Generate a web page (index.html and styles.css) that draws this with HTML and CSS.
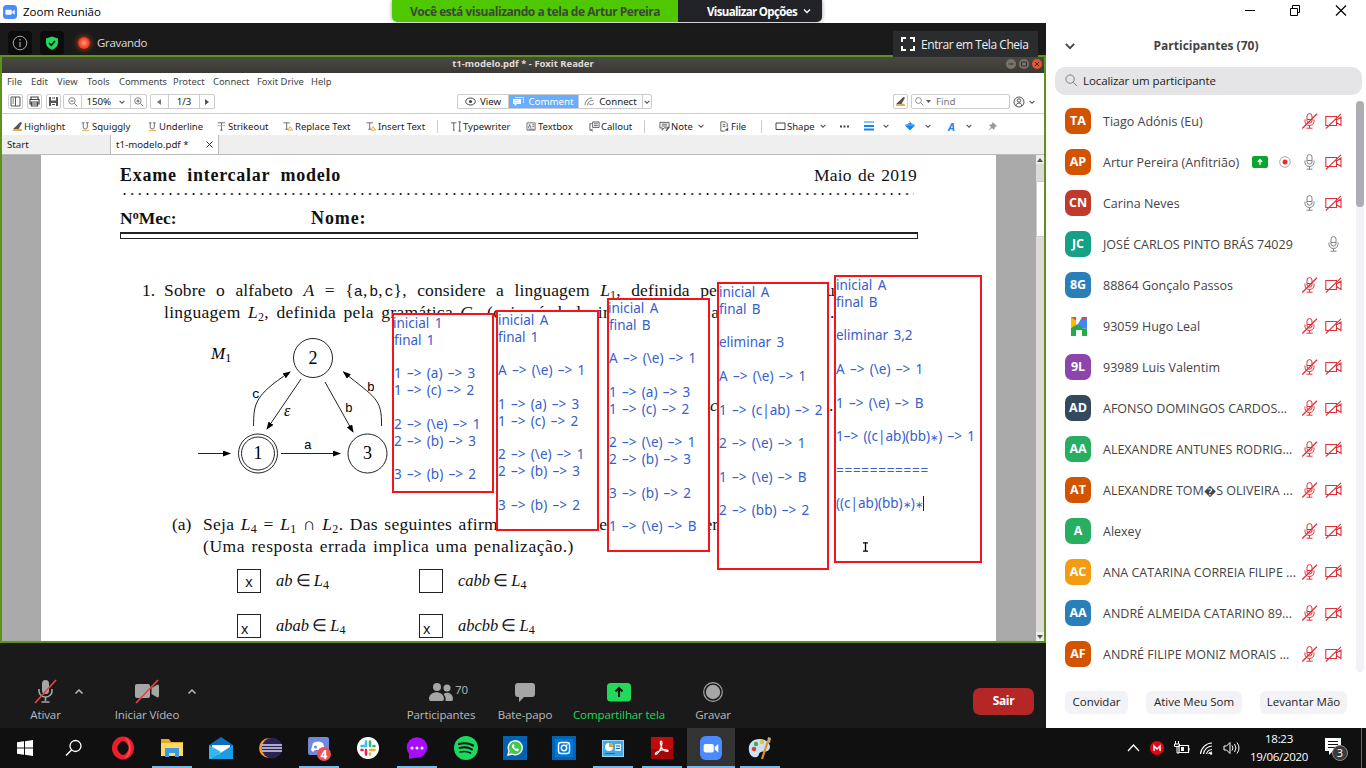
FILE: index.html
```html
<!DOCTYPE html>
<html lang="pt">
<head>
<meta charset="utf-8">
<title>Zoom Reunião</title>
<link rel="stylesheet" href="styles.css">
</head>
<body>
<svg class="defs" width="0" height="0">
  <symbol id="zoomcam" viewBox="0 0 24 24"><rect width="24" height="24" rx="6" fill="#4a8cff"/><rect x="4" y="8" width="11" height="8.500" rx="2" fill="#fff"/><path d="M16 11l4-3v8.500l-4-3z" fill="#fff"/></symbol>
  <symbol id="down" viewBox="0 0 10 10"><path d="M2 3.500l3 3 3-3" fill="none" stroke="currentColor" stroke-width="1.300"/></symbol>
  <symbol id="up" viewBox="0 0 10 10"><path d="M1.500 6.500L5 3l3.500 3.500" fill="none" stroke="currentColor" stroke-width="1.500"/></symbol>
  <symbol id="mic" viewBox="0 0 16 16"><g fill="none" stroke="currentColor"><rect x="5.500" y=".6" width="5" height="9.500" rx="2.500"/><path d="M3.500 6.500v2a4.500 4 0 0 0 9 0v-2M8 12.500v2.500M5 15.200h6M5.500 6.500h5"/></g></symbol>
  <symbol id="micoff" viewBox="0 0 16 16"><use href="#mic"/><path d="M.8 15.500L15.500.8" stroke="currentColor" stroke-width="1.300"/></symbol>
  <symbol id="camoff" viewBox="0 0 17 16"><path d="M.8 3.500h10.700v9H.8zM11.500 7l4.500-3v8.500l-4.500-3M.8 15.500L16 .8" fill="none" stroke="currentColor" stroke-width="1.100"/></symbol>
  <symbol id="lens" viewBox="0 0 14 14"><circle cx="5.500" cy="5.500" r="4.500" fill="none" stroke="currentColor"/><path d="M9 9l4 4" stroke="currentColor"/></symbol>
  <symbol id="pen" viewBox="0 0 12 12"><path d="M3 7l6-6 2 1-4 7H2z" fill="#555"/><path d="M1 9l2-2 2 2z" fill="#555"/><path d="M1 10h9V8.500H7L5.500 10" fill="#f0a030"/><path d="M1 10h10" stroke="#f0a030" stroke-width="1.500"/></symbol>
  <symbol id="uline" viewBox="0 0 10 12"><path d="M2.500 2v4.500a2 2 0 0 0 4.500 0V2M1 2h3M5.500 2h3" fill="none" stroke="#666"/><path d="M1 10.500h8" stroke="#e2a640"/></symbol>
  <symbol id="tee" viewBox="0 0 10 12"><path d="M1 2h8M5 2v8M3.500 10h3" stroke="#666" fill="none"/><path d="M1 5h8" stroke="#e2a640"/></symbol>
  <symbol id="teea" viewBox="0 0 11 12"><path d="M0 2h7M3.500 2v7M2 9h3" stroke="#666" fill="none"/><path d="M5 10l2-4 3 4z" stroke="#e8a030" fill="none"/></symbol>
  <symbol id="type" viewBox="0 0 12 12"><path d="M0 2h6M3 2v8M2 10h2M8 1h3M9.500 1v10M8 11h3" stroke="#555" fill="none"/></symbol>
  <symbol id="tbox" viewBox="0 0 12 12"><path d="M1 2h9v8H1z" stroke="#777" fill="#eee"/><path d="M2.500 8l1.500-4 1.500 4M7 4h2M7 6h2M3 9h6" stroke="#555" fill="none" stroke-width=".8"/></symbol>
  <symbol id="callout" viewBox="0 0 12 12"><path d="M4 1h7v6H4zM5.500 3h4M5.500 5h4M3 3H1v7h3M4 8.500L2.500 10 4 11.500" stroke="#555" fill="none"/></symbol>
  <symbol id="note" viewBox="0 0 12 12"><path d="M1 1.500h10v6H5.500L3.500 10V7.500H1zM3 3.500h6M3 5.500h6" stroke="#555" fill="none"/><path d="M7 11l3-5 1.500 1-3 4z" fill="#555"/></symbol>
  <symbol id="file" viewBox="0 0 12 12"><path d="M2 1h5l2 2v4M2 1v10h4M4 4h3M4 6h3" stroke="#555" fill="none"/><path d="M6 10l4-3v4z" fill="#555"/></symbol>
  <symbol id="conn" viewBox="0 0 12 12"><path d="M1 10a8 8 0 0 1 8-8M4 10a5 5 0 0 1 6-5M5 8a4 4 0 0 0 6 0" stroke="#777" fill="none"/></symbol>
  <marker id="head" markerWidth="8" markerHeight="6" refX="7" refY="3" orient="auto" markerUnits="userSpaceOnUse"><path d="M0 0L8 3 0 6z"/></marker>
</svg>
<header class="titlebar">
  <svg class="i14"><use href="#zoomcam"/></svg><span class="apptitle">Zoom Reunião</span>
  <div class="banner"><b class="viewing"><span>Você está visualizando a tela de Artur Pereira</span></b><b class="options"><span>Visualizar Opções</span><svg class="i10"><use href="#down"/></svg></b></div>
  <svg class="winctl" width="110" height="20" viewBox="0 0 110 20"><path d="M5 10.500h10" stroke="#000"/><path d="M50.500 8.500h7v7h-7zM52.500 8.500v-3h7v7h-2.500" fill="none" stroke="#000"/><path d="M96 5.500l10 10M106 5.500l-10 10" stroke="#000" stroke-width="1.200"/></svg>
</header>
<div class="main">
<section class="meeting">
  <div class="status">
    <span class="badge"><svg width="16" height="16"><circle cx="8" cy="8" r="6.800" fill="none" stroke="#aaa"/><path d="M8 7v5M8 4v1.500" stroke="#aaa" stroke-width="1.200"/></svg></span>
    <span class="badge"><svg width="14" height="14" viewBox="0 0 14 14"><path d="M7 .5l6 2v4c0 3.500-2.500 6-6 7.300C3.500 12.500 1 10 1 6.500v-4z" fill="#23d959"/><path d="M4 7l2.300 2.300L10 5" stroke="#111" stroke-width="1.500" fill="none"/></svg></span>
    <i class="rec"></i><span class="recording">Gravando</span>
    <div class="full"><svg width="14" height="14" viewBox="0 0 14 14"><path d="M1 5V1h4M9 1h4v4M13 9v4H9M5 13H1V9" fill="none" stroke="#fff" stroke-width="2"/></svg><span>Entrar em Tela Cheia</span></div>
  </div>
  <div class="share">
    <div class="foxtitle"><b>t1-modelo.pdf * - Foxit Reader</b><svg class="ubuntu" width="38" height="12"><circle cx="6" cy="6" r="5" fill="#77746c"/><circle cx="19" cy="6" r="5" fill="#77746c"/><circle cx="32" cy="6" r="5" fill="#e8552d"/><path d="M3.500 6h5M16.500 4h5v4h-5zM30 4l4 4M34 4l-4 4" fill="none" stroke="#33312e"/></svg></div>
    <nav class="menu"><span>File</span><span>Edit</span><span>View</span><span>Tools</span><span>Comments</span><span>Protect</span><span>Connect</span><span>Foxit Drive</span><span>Help</span></nav>
    <div class="tools">
      <div class="box sq"><svg width="11" height="11"><path d="M1 1h9v9H1zM5.500 1v9M2.500 3h1.500M2.500 5h1.500M2.500 7h1.500" fill="none" stroke="#555"/></svg></div>
      <div class="box sq"><svg width="11" height="11"><path d="M2 3V1h7v2M1 3.500h9V8H1zM2.500 6h6v4h-6z" fill="none" stroke="#444" stroke-width="1.200"/></svg></div>
      <div class="box sq"><svg width="11" height="11"><path d="M1 1h9v9H1z" fill="#555"/><path d="M3 1h5v3.500H3zM3 7h5v3H3z" fill="#fff"/><path d="M4 2h3M4 8.500h3" stroke="#555"/></svg></div>
      <div class="box zoomgrp"><span><svg class="i10"><use href="#lens" width="10" height="10"/><path d="M2.500 4h3" stroke="#555"/></svg></span><span>150%&nbsp; <svg class="i8"><use href="#down"/></svg></span><span><svg class="i10"><use href="#lens" width="10" height="10"/><path d="M2.500 4h3M4 2.500v3" stroke="#555"/></svg></span></div>
      <div class="box pagegrp"><span><svg width="5" height="6"><path d="M4 0v6L0 3z" fill="#777"/></svg></span><span>1/3</span><span><svg width="5" height="6"><path d="M0 0v6l4-3z" fill="#555"/></svg></span></div>
      <div class="box modes"><span><svg width="11" height="9"><ellipse cx="5.500" cy="4.500" rx="4.800" ry="3.500" fill="none" stroke="#444"/><circle cx="5.500" cy="4.500" r="1.600" fill="#444"/></svg>View</span><span class="on"><svg width="11" height="10"><path d="M0 2h8v5H4L2 9 1.500 7H0z" fill="#fff"/><path d="M2 .5h8.500V6M1.500 3.500h5M1.500 5.500h5" fill="none" stroke="#cfe4ff"/></svg>Comment</span><span><svg class="i11"><use href="#conn"/></svg>Connect</span><span><svg class="i8"><use href="#down"/></svg></span></div>
      <div class="box sq hl"><svg class="i11"><use href="#pen"/></svg></div>
      <div class="box find"><svg class="i9"><use href="#lens"/></svg><svg width="5" height="3"><path d="M0 0h5L2.500 3z" fill="#555"/></svg><span>Find</span></div>
      <div class="user"><svg width="12" height="12"><circle cx="6" cy="6" r="5" fill="none" stroke="#555"/><circle cx="6" cy="4.500" r="1.700" fill="none" stroke="#555"/><path d="M3 10c0-4 6-4 6 0" fill="none" stroke="#555"/></svg><svg class="i8"><use href="#down"/></svg></div>
    </div>
    <div class="comments">
      <span><svg class="i11"><use href="#pen"/></svg>Highlight</span><span><svg class="i11"><use href="#uline"/></svg>Squiggly</span><span><svg class="i11"><use href="#uline"/></svg>Underline</span><span><svg class="i11"><use href="#tee"/></svg>Strikeout</span><span><svg class="i11"><use href="#teea"/></svg>Replace Text</span><span><svg class="i11"><use href="#teea"/></svg>Insert Text</span><i class="sep"></i>
      <span><svg class="i11"><use href="#type"/></svg>Typewriter</span><span><svg class="i11"><use href="#tbox"/></svg>Textbox</span><span><svg class="i11"><use href="#callout"/></svg>Callout</span><i class="sep"></i>
      <span><svg class="i11"><use href="#note"/></svg>Note</span><svg class="i8"><use href="#down"/></svg><span><svg class="i11"><use href="#file"/></svg>File</span><i class="sep"></i>
      <span><svg width="11" height="9"><path d="M1 1h9v6.500H1z" fill="none" stroke="#444"/></svg>Shape</span><svg class="i8"><use href="#down"/></svg>
      <svg width="11" height="3"><path d="M1 1.500h9" stroke="#444" stroke-width="1.800" stroke-dasharray="2 1.500"/></svg>
      <svg width="10" height="10"><path d="M0 1h10" stroke="#8fc3f8" stroke-width="2"/><path d="M0 5h10M0 8.500h10" stroke="#1a84ee" stroke-width="2"/></svg><svg class="i8"><use href="#down"/></svg>
      <svg width="10" height="10"><path d="M0 4.500l5-3 5 3-5 5z" fill="#1a84ee"/><path d="M4 0l3 3M0 4h10" stroke="#74b4f4"/></svg><svg class="i8"><use href="#down"/></svg>
      <b class="ablue">A</b><svg class="i8"><use href="#down"/></svg>
      <svg width="9" height="9"><path d="M4.500 0L9 4 7 5 6 8 1 3l3-1zM0 9l3-4 1 1z" fill="#999"/></svg>
    </div>
    <div class="tabs"><span>Start</span><span class="cur">t1-modelo.pdf * <svg width="7" height="7"><path d="M.5.500l6 6M6.500.500l-6 6" stroke="#333"/></svg></span></div>
    <div class="viewer">
      <article class="page">
        <div class="heading"><b class="w220">Exame intercalar modelo</b><span class="w103">Maio de 2019</span></div>
        <div class="dots"></div>
        <div class="fields"><b class="w67">N<sup>o</sup>Mec:</b><b class="w57">Nome:</b></div>
        <div class="rule"></div>
        <div class="question">
          <span>1.</span>
          <div>
            <p><span class="w553">Sobre o alfabeto <i>A</i> = {<code>a</code>,&#8202;<code>b</code>,&#8202;<code>c</code>}, considere a linguagem <i>L</i><sub>1</sub>, definida pe</span><span class="rest">u</span></p>
            <p><span class="w444">linguagem <i>L</i><sub>2</sub>, definida pela gramática <i>G</i><sub>2</sub> (cujo símbolo in</span><span class="rest2">a</span><span class="dot">.</span></p>
          </div>
        </div>
        <div class="figrow">
        <svg class="fig" width="240" height="189" viewBox="180 324 240 189">
          <g fill="none" stroke="#222"><circle cx="313" cy="358" r="19.500"/><circle cx="258" cy="453.500" r="19.500"/><circle cx="258" cy="453.500" r="16.500"/><circle cx="367.500" cy="453.500" r="19.500"/>
          <g marker-end="url(#head)"><path d="M198 453.500h32"/><path d="M281 453.500h59"/><path d="M253.500 426C254 405 253 396 290 372"/><path d="M301 379L267 429"/><path d="M325 382l28 50"/><path d="M381.500 426C382 398 375 398 343.500 372"/></g></g>
          <g class="num" text-anchor="middle"><text x="313" y="364">2</text><text x="258" y="459">1</text><text x="367.500" y="459">3</text></g>
          <g class="lab" text-anchor="middle"><text x="256" y="398">c</text><text x="308" y="449">a</text><text x="349" y="412">b</text><text x="371" y="391">b</text></g>
          <text class="eps" x="284" y="416">ε</text><text class="m1" x="211" y="359">M<tspan font-size="12" font-style="normal" dy="3">1</tspan></text>
        </svg>
        <span class="peek2"><i>c</i></span><span class="peek3">.</span>
        </div>
        <div class="sub"><span>(a)</span><div><p><span class="w294">Seja <i>L</i><sub>4</sub> = <i>L</i><sub>1</sub> ∩ <i>L</i><sub>2</sub>. Das seguintes afirm</span><span class="after">e</span><span class="after2">er</span></p><p><span class="w371">(Uma resposta errada implica uma penalização.)</span></p></div></div>
        <div class="answers">
          <span class="check">x</span><span><em><i>ab</i> ∈ <i>L</i><sub>4</sub></em></span><span class="check"></span><span><em><i>cabb</i> ∈ <i>L</i><sub>4</sub></em></span>
          <span class="check low">x</span><span><em><i>abab</i> ∈ <i>L</i><sub>4</sub></em></span><span class="check low">x</span><span><em><i>abcbb</i> ∈ <i>L</i><sub>4</sub></em></span>
        </div>
<pre class="memo m-a">inicial 1
final 1

1 –&gt; (a) –&gt; 3
1 –&gt; (c) –&gt; 2

2 –&gt; (\e) –&gt; 1
2 –&gt; (b) –&gt; 3

3 –&gt; (b) –&gt; 2</pre>
<pre class="memo m-b">inicial A
final 1

A –&gt; (\e) –&gt; 1

1 –&gt; (a) –&gt; 3
1 –&gt; (c) –&gt; 2

2 –&gt; (\e) –&gt; 1
2 –&gt; (b) –&gt; 3

3 –&gt; (b) –&gt; 2</pre>
<pre class="memo m-c">inicial A
final B

A –&gt; (\e) –&gt; 1

1 –&gt; (a) –&gt; 3
1 –&gt; (c) –&gt; 2

2 –&gt; (\e) –&gt; 1
2 –&gt; (b) –&gt; 3

3 –&gt; (b) –&gt; 2

1 –&gt; (\e) –&gt; B</pre>
<pre class="memo m-d">inicial A
final B

eliminar 3

A –&gt; (\e) –&gt; 1

1 –&gt; (c|ab) –&gt; 2

2 –&gt; (\e) –&gt; 1

1 –&gt; (\e) –&gt; B

2 –&gt; (bb) –&gt; 2</pre>
<pre class="memo m-e">inicial A
final B

eliminar 3,2

A –&gt; (\e) –&gt; 1

1 –&gt; (\e) –&gt; B

1–&gt; ((c|ab)(bb)<span class="ast">∗</span>) –&gt; 1

<span class="eq">===========</span>

((c|ab)(bb)<span class="ast">∗</span>)<span class="ast">∗</span><i class="caret"></i></pre>
        <svg class="ibeam" width="7" height="10"><path d="M1 .8h2l.5.700.500-.7h2M1 9.200h2l.5-.7.5.700h2M3.500 1v8" fill="none" stroke="#000" stroke-width="1.300"/></svg>
      </article>
      <div class="vscroll"><span><svg width="6" height="4"><path d="M0 4l3-4 3 4z" fill="#555"/></svg></span><i></i><span class="end"><svg width="6" height="4"><path d="M0 0l3 4 3-4z" fill="#555"/></svg></span></div>
    </div>
  </div>
  <footer class="controls">
    <div class="ctl c58"><svg width="24" height="26" viewBox="0 0 24 26"><rect x="8" y="1" width="7" height="14" rx="3.500" fill="#a6a6a6"/><path d="M5 10v2a6.500 6 0 0 0 13 0v-2M11.500 18v4M7.500 23h8" fill="none" stroke="#a6a6a6" stroke-width="1.600"/><path d="M1 24L22 1" stroke="#e5453f" stroke-width="1.700"/></svg><span>Ativar</span></div><svg class="i10 cv"><use href="#up"/></svg>
    <div class="ctl c90"><svg width="26" height="26" viewBox="0 0 26 26"><rect x="1" y="5" width="15" height="14" rx="2" fill="#a6a6a6"/><path d="M17.500 9l6-3.500q1.500 0 1.500 2v9q0 2-1.500 2l-6-3.500z" fill="#a6a6a6"/><path d="M2 24L24 1" stroke="#e5453f" stroke-width="1.700"/></svg><span>Iniciar Vídeo</span></div><svg class="i10 cv cv2"><use href="#up"/></svg>
    <div class="ctl c80"><svg width="26" height="26" viewBox="0 0 26 26"><g fill="#a6a6a6"><circle cx="9" cy="8" r="4"/><circle cx="19" cy="9" r="3.500"/><path d="M1 20c0-9 15-9 15 0q0 2-2 2H3q-2 0-2-2zM17.500 22c.8-3-.5-5-2-7 4-3 9.500-.5 9.500 5q0 2-1.500 2z"/></g></svg><em>70</em><span>Participantes</span></div>
    <div class="ctl c88"><svg width="24" height="26" viewBox="0 0 24 26"><path d="M5 4h14q3 0 3 3v8q0 3-3 3h-8l-5 5v-5H5q-3 0-3-3V7q0-3 3-3z" fill="#a6a6a6"/></svg><span>Bate-papo</span></div>
    <div class="ctl c100 green"><svg width="24" height="26" viewBox="0 0 24 26"><rect y="4" width="24" height="18.500" rx="3.500" fill="#23d959"/><path d="M12 18V9.500M8.500 12.500L12 9l3.500 3.500" stroke="#111" stroke-width="2" fill="none"/></svg><span>Compartilhar tela</span></div>
    <div class="ctl c88"><svg width="24" height="26" viewBox="0 0 24 26"><circle cx="12" cy="13" r="7.200" fill="#a6a6a6"/><circle cx="12" cy="13" r="9.300" fill="none" stroke="#a6a6a6" stroke-width="1.200"/></svg><span>Gravar</span></div>
    <b class="leave">Sair</b>
  </footer>
</section>
<aside class="panel">
  <div class="phead"><svg class="i12"><use href="#down"/></svg><b>Participantes (70)</b></div>
  <div class="search"><svg class="i14"><use href="#lens"/></svg><span>Localizar um participante</span></div>
  <div class="listwrap"><ul class="list">
    <li><b class="av orange">TA</b><span>Tiago Adónis (Eu)</span><svg class="st"><use href="#micoff"/></svg><svg class="st"><use href="#camoff"/></svg></li>
    <li><b class="av orange">AP</b><span>Artur Pereira (Anfitrião)</span><svg class="sh" width="16" height="12"><rect width="16" height="12" rx="2" fill="#0aa52f"/><path d="M8 9V4M5.800 6L8 3.500 10.200 6" stroke="#fff" stroke-width="1.300" fill="none"/></svg><svg class="rc" width="12" height="12"><circle cx="6" cy="6" r="5.300" fill="none" stroke="#aaa"/><circle cx="6" cy="6" r="2.500" fill="#f02a2a"/></svg><svg class="st gray"><use href="#mic"/></svg><svg class="st"><use href="#camoff"/></svg></li>
    <li><b class="av red">CN</b><span>Carina Neves</span><svg class="st gray"><use href="#mic"/></svg><svg class="st"><use href="#camoff"/></svg></li>
    <li><b class="av teal">JC</b><span>JOSÉ CARLOS PINTO BRÁS 74029</span><svg class="st gray"><use href="#mic"/></svg></li>
    <li><b class="av blue">8G</b><span>88864 Gonçalo Passos</span><svg class="st"><use href="#micoff"/></svg><svg class="st"><use href="#camoff"/></svg></li>
    <li><svg class="av" viewBox="0 0 26 26"><path d="M6 4h5v9l-5 2z" fill="#fbbc04"/><path d="M6 4h5v3.500z" fill="#ea4335"/><path d="M17 4h5v12l-5-1v-3l-5 1z" fill="#4285f4"/><path d="M17 4h5v1l-5 2z" fill="#ea4335"/><path d="M6 15l5-3h6v3l5 1v7h-5v-6h-6v6H6z" fill="#27a84a"/><path d="M11 12l6-3v4z" fill="#4285f4"/></svg><span>93059 Hugo Leal</span><svg class="st"><use href="#micoff"/></svg><svg class="st"><use href="#camoff"/></svg></li>
    <li><b class="av purple">9L</b><span>93989 Luis Valentim</span><svg class="st"><use href="#micoff"/></svg><svg class="st"><use href="#camoff"/></svg></li>
    <li><b class="av navy">AD</b><span>AFONSO DOMINGOS CARDOS...</span><svg class="st"><use href="#micoff"/></svg><svg class="st"><use href="#camoff"/></svg></li>
    <li><b class="av green2">AA</b><span>ALEXANDRE ANTUNES RODRIG...</span><svg class="st"><use href="#micoff"/></svg><svg class="st"><use href="#camoff"/></svg></li>
    <li><b class="av orange">AT</b><span>ALEXANDRE TOM�S OLIVEIRA ...</span><svg class="st"><use href="#micoff"/></svg><svg class="st"><use href="#camoff"/></svg></li>
    <li><b class="av green2">A</b><span>Alexey</span><svg class="st"><use href="#micoff"/></svg><svg class="st"><use href="#camoff"/></svg></li>
    <li><b class="av amber">AC</b><span>ANA CATARINA CORREIA FILIPE ...</span><svg class="st"><use href="#micoff"/></svg><svg class="st"><use href="#camoff"/></svg></li>
    <li><b class="av blue">AA</b><span>ANDRÉ ALMEIDA CATARINO 89...</span><svg class="st"><use href="#micoff"/></svg><svg class="st"><use href="#camoff"/></svg></li>
    <li><b class="av orange">AF</b><span>ANDRÉ FILIPE MONIZ MORAIS ...</span><svg class="st"><use href="#micoff"/></svg><svg class="st"><use href="#camoff"/></svg></li>
  </ul><div class="bar"><i></i></div></div>
  <div class="actions"><span>Convidar</span><span>Ative Meu Som</span><span>Levantar Mão</span></div>
</aside>
</div>
<footer class="taskbar">
  <div class="app"><svg width="16" height="16"><path d="M0 2.300l7-1V7.500H0zM8 1.200L16 0v7.500H8zM0 8.500h7v6.200l-7-1zM8 8.500h8V16l-8-1.200z" fill="#fff"/></svg></div>
  <div class="app"><svg width="18" height="18"><circle cx="10.500" cy="7" r="5.500" fill="none" stroke="#fff" stroke-width="1.300"/><path d="M6.500 11L1 16.500" stroke="#fff" stroke-width="1.500"/></svg></div>
  <div class="app"><svg width="24" height="24"><ellipse cx="12" cy="12" rx="8.300" ry="8.800" fill="none" stroke="#e8202b" stroke-width="5.400"/><path d="M13 1.500c9 1 9 20 0 21 4-3 5-7 5-10.500S17 4 13 1.500z" fill="#ff5058"/><ellipse cx="12" cy="12" rx="4.200" ry="7" fill="#101010"/></svg></div>
  <div class="app run"><svg width="22" height="20"><path d="M0 1h8l2 3h12v14H0z" fill="#e9a820"/><path d="M0 5h22v13H0z" fill="#ffd968"/><path d="M4 10h14v9h-4v-4H8v4H4z" fill="#3c9be0"/></svg></div>
  <div class="app"><svg width="24" height="22"><path d="M0 8l12-8 12 8v14H0z" fill="#0d6fbd"/><path d="M3 8h18v10H3z" fill="#fff"/><path d="M0 8l12 7-8 7H0z" fill="#35b8f1"/><path d="M24 8v14H2z" fill="#1b9de2"/></svg></div>
  <div class="app"><svg width="24" height="22"><circle cx="11" cy="11" r="10" fill="#f79a29"/><circle cx="14" cy="11" r="10.300" fill="#2d2255"/><path d="M4 8h20M4 11h20M4 14h20" stroke="#dcd8ee" stroke-width="1.600"/></svg></div>
  <div class="app run"><svg width="26" height="26"><path d="M4 2h17q2 0 2 2v20l-4-4H4q-2 0-2-2V4q0-2 2-2z" fill="#7289da"/><path d="M7 8q5-3 10 0l2 7-3 2-2-2H9l-2 2-2-2z" fill="#fff"/><circle cx="9.500" cy="12" r="1.500" fill="#7289da"/><circle cx="18" cy="19" r="7" fill="#ed5050"/><text class="count" x="18" y="23.500" text-anchor="middle">4</text></svg></div>
  <div class="app"><svg width="22" height="22"><circle cx="11" cy="11" r="11" fill="#fff"/><g stroke-width="2.600" stroke-linecap="round" fill="none"><path d="M9 4.500v4M4.500 9H9" stroke="#36c5f0"/><path d="M13 4.500V9M17.500 9h-1" stroke="#2eb67d"/><path d="M13 13h4.500M13 17.500v-1" stroke="#ecb22e"/><path d="M9 13v4.500M4.500 13h1" stroke="#e01e5a"/></g></svg></div>
  <div class="app run"><svg width="22" height="22"><circle cx="11" cy="10.500" r="10.300" fill="#a90dfd"/><path d="M3 15v7l8-2z" fill="#a90dfd"/><g fill="#fff"><circle cx="6" cy="11" r="1.500"/><circle cx="11" cy="11" r="1.500"/><circle cx="16" cy="11" r="1.500"/></g></svg></div>
  <div class="app"><svg width="24" height="24"><circle cx="12" cy="12" r="12" fill="#1ed760"/><g fill="none" stroke="#101010" stroke-linecap="round"><path d="M5 8q8-2 14 1.500" stroke-width="2.200"/><path d="M5.500 12q7-2 12.500 1.500" stroke-width="1.900"/><path d="M6 16q6-1.500 10.500 1" stroke-width="1.600"/></g></svg></div>
  <div class="app"><svg width="24" height="24"><rect width="24" height="24" fill="#0063b1"/><path d="M5 19l1-4a7 7 0 1 1 3 3z" fill="#45c653" stroke="#fff" stroke-width="1.300"/><path d="M9 9l1.500-1 1 2-.7 1 2.200 2 1-.8 2 1-1 2q-3 0-6-4z" fill="#fff"/></svg></div>
  <div class="app"><svg width="24" height="24"><rect width="24" height="24" fill="#0063b1"/><rect x="3" y="3" width="18" height="18" fill="#0078d7"/><rect x="6.500" y="6.500" width="11" height="11" rx="2.500" fill="none" stroke="#fff" stroke-width="1.400"/><circle cx="12" cy="12" r="2.700" fill="none" stroke="#fff" stroke-width="1.400"/><circle cx="15" cy="9" r=".8" fill="#fff"/></svg></div>
  <div class="app run"><svg width="22" height="17"><rect width="22" height="17" fill="#9bd6f5"/><rect x="1" y="1" width="20" height="15" fill="#43aae5"/><circle cx="7" cy="7" r="4" fill="#fff"/><path d="M7 7V3a4 4 0 0 1 4 4z" fill="#f0a030"/><path d="M13 4h6v7h-6z" fill="#d8f0fb"/><path d="M3 13.500h10M14 6h4M14 8.500h4" stroke="#2267a5"/></svg></div>
  <div class="app run"><svg width="22" height="22"><rect width="22" height="22" fill="#c40b0b"/><path d="M0 12h22v10H0z" fill="#a30606"/><path d="M10 4c1.500 0 1 3 .5 5-.8 3-3.500 8-5.500 8.500-1.500-.5 0-2.500 3-3.500 3-1.200 7.500-1.800 9-.5.800 1.500-2.500 1.200-4.500-.5C10 11 8.500 4.500 10 4z" fill="none" stroke="#fff" stroke-width="1.200"/></svg></div>
  <div class="app run active"><svg width="22" height="24" viewBox="0 0 24 24" preserveAspectRatio="none"><use href="#zoomcam"/></svg></div>
  <div class="app run"><svg width="24" height="24"><path d="M12 3C3 3 0 9 1 15c1 6 6 7 8 6 3-2 1-4 4-5s8 1 9-5c0-5-5-8-10-8z" fill="#c8e3f3"/><circle cx="6" cy="13" r="2.300" fill="#e53e3e"/><circle cx="8" cy="8" r="2.200" fill="#4aa84a"/><circle cx="14" cy="6" r="2.200" fill="#f2bd30"/><path d="M20 5l-6 18" stroke="#e58a2a" stroke-width="2.200"/><path d="M19 6l1-5 3 1-1 5z" fill="#c9a475"/></svg></div>
  <div class="tray">
    <svg width="13" height="10"><path d="M1 8l5.500-6L12 8" fill="none" stroke="#fff" stroke-width="1.300"/></svg>
    <svg width="14" height="14"><circle cx="7" cy="7" r="7" fill="#e30613"/><path d="M4 10V5l3 3 3-3v5" fill="none" stroke="#fff" stroke-width="1.500"/></svg>
    <svg width="16" height="14"><path d="M5 4.500h9.500v7H5zM15 7v2.500" fill="none" stroke="#fff" stroke-width="1.200"/><path d="M7 6h3v4H7z" fill="#fff"/><path d="M1.500 0v3M4.500 0v3M.5 3h5v2.500h-5zM3 6v6h2" fill="none" stroke="#fff"/></svg>
    <svg width="14" height="14"><path d="M1.500 13A12 12 0 0 1 13 2M4.500 13A9 9 0 0 1 13 5M7.500 13A6 6 0 0 1 13 8.500M10 13q0-2 3-2" fill="none" stroke="#fff" stroke-width="1.200"/><circle cx="12" cy="12.500" r="1.200" fill="#fff"/></svg>
    <svg width="17" height="14"><path d="M1 5h2.500L7 1.500v11L3.500 9H1z" fill="none" stroke="#fff"/><path d="M9 4.500q2 2.500 0 5M11.500 3q3 4 0 8M14 1.500q4 5.500 0 11" fill="none" stroke="#fff"/></svg>
  </div>
  <div class="clock"><span>18:23</span><span>19/06/2020</span></div>
  <div class="notif"><svg width="26" height="26"><path d="M1 3h16v13H9l-4 4v-4H1z" fill="#fff"/><path d="M4 6.500h10M4 9.500h10M4 12.500h7" stroke="#111"/><circle cx="16" cy="18" r="7.500" fill="#3a3a3a" stroke="#888"/><text x="16" y="22" text-anchor="middle" class="three">3</text></svg></div>
</footer>
</body>
</html>
```
FILE: styles.css
```css
* { box-sizing: border-box; }
body { margin: 0; width: 1366px; height: 768px; overflow: hidden; background: #fff; font-family: "Open Sans", "Noto Sans", sans-serif; color: #333; }
p, ul, pre { margin: 0; padding: 0; }
svg { flex: none; display: block; }
.defs { position: absolute; }
.i8 { width: 8px; height: 8px; color: #555; } .i9 { width: 9px; height: 9px; } .i10 { width: 10px; height: 10px; }
.i11 { width: 11px; height: 11px; } .i12 { width: 14px; height: 14px; } .i14 { width: 14px; height: 14px; }

.titlebar { position: relative; height: 23px; display: flex; align-items: center; padding-left: 3px; gap: 6px; font-size: 12px; color: #000; background: #fff; }
.apptitle { font-size: 11.5px; }
.banner { position: absolute; left: 392px; top: 0; display: flex; height: 22px; font-size: 12px; border-radius: 0 0 5px 5px; box-shadow: 0 0 4px #0006; overflow: hidden; }
.banner b { display: flex; align-items: center; justify-content: center; }
.viewing { width: 286px; background: #4fc800; color: #3a4a35; letter-spacing: -.47px; }
.options { width: 144px; background: #222326; color: #fff; gap: 5px; padding-left: 19px; font-size: 11.5px; letter-spacing: -.65px; }
.winctl { position: absolute; left: 1240px; top: 0; }

.main { display: flex; height: 705px; }
.meeting { width: 1046px; height: 705px; background: #1a1a1a; display: flex; flex-direction: column; }
.status { height: 32px; display: flex; align-items: flex-end; padding-left: 8px; gap: 8px; color: #ddd; font-size: 12px; }
.badge { width: 24px; height: 24px; border-radius: 4px; background: #0c0c0c; display: flex; align-items: center; justify-content: center; }
.rec { width: 12px; height: 12px; border-radius: 50%; margin: 0 -1px 6px 6px; background: radial-gradient(#ff9a80, #f23b22 60%); box-shadow: 0 0 6px #d44a20; }
.recording { height: 24px; line-height: 24px; font-size: 11.5px; letter-spacing: -.3px; }
.full { position: relative; z-index: 2; margin: 0 8px -2px auto; width: 145px; height: 26px; background: #2b2c2e; display: flex; align-items: center; gap: 6px; padding-left: 8px; font-size: 12px; color: #eee; white-space: nowrap; letter-spacing: -.45px; }
.share { height: 588px; border: 2px solid #5e931b; display: flex; flex-direction: column; background: #fff; font-family: "Noto Sans", sans-serif; font-size: 9.7px; color: #222; white-space: nowrap; }
.foxtitle { position: relative; height: 16px; line-height: 14px; text-align: center; background: linear-gradient(#4a4842, #3b3935); color: #dfdbd2; font-size: 9.5px; }
.ubuntu { position: absolute; right: 1px; top: 1px; }
.menu { display: grid; height: 17px; align-items: center; padding: 0 0 1px 5px; color: #444; grid-template-columns: 24px 26px 30px 32px 54px 40px 44px 54px 40px; font-size: 9.4px; }
.tools { display: grid; height: 24px; padding: 4px 0 4px 6px; border-bottom: 1px solid #ccc; grid-template-columns: 19px 19px 17px 87px 307px 436px 18px 102px 30px; }
.box { display: flex; align-items: center; justify-content: center; height: 15px; border: 1px solid #ccc; border-radius: 2px; justify-self: start; }
.sq { width: 15px; }
.zoomgrp { width: 84px; display: grid; grid-template-columns: 17px 49px 16px; }
.box span { display: flex; align-items: center; justify-content: center; gap: 4px; height: 13px; border-left: 1px solid #ccc; }
.box span:first-child { border-left: 0; }
.zoomgrp .i10, .find .i9 { color: #555; }
.pagegrp { width: 65px; display: grid; grid-template-columns: 17px 31px 15px; }
.modes { width: 195px; display: grid; grid-template-columns: 50px 70px 64px 9px; }
.modes .on { background: #68adff; color: #fff; }
.find { width: 99px; justify-content: flex-start; padding-left: 3px; gap: 2px; color: #777; }
.box.find span { border: 0; margin-left: 3px; }
.user { display: flex; align-items: center; gap: 3px; }
.comments { display: grid; height: 21px; align-items: center; padding: 3px 0 0 10px; color: #222; font-size: 9.5px; grid-template-columns: 68px 67px 69px 67px 83px 71px 14px 75px 63px 55px 15px 38px 22px 42px 14px 44px 20px 25px 18px 23px 19px 24px 17px 23px 12px; }
.comments > span { display: flex; align-items: center; gap: 1px; }
.sep { height: 13px; width: 1px; background: #ccc; }
.ablue { color: #1a84ee; font-style: italic; font-size: 11px; }
.tabs { display: flex; height: 20px; background: #efeff0; border-bottom: 1px solid #bbb; line-height: 19px; }
.tabs span { width: 108px; padding-left: 5px; }
.tabs .cur { width: 109px; display: flex; align-items: center; justify-content: space-between; background: #fff; border: solid #bbb; border-width: 0 1px; padding-right: 5px; }

.viewer { position: relative; height: 486px; background: #aaa; display: flex; padding-left: 39px; }
.page { position: relative; width: 955px; height: 486px; background: #fff; font-family: "Liberation Serif", serif; font-size: 17.5px; line-height: 22px; color: #111; padding: 9px 79px 0; }
.page [class^="w"] { display: inline-block; text-align: justify; text-align-last: justify; flex: none; white-space: nowrap; }
.w220 { width: 221px; font-size: 18px; letter-spacing: .75px; } .w103 { width: 103px; letter-spacing: .2px; } .w67 { width: 68px; } .w57 { width: 58px; font-size: 18px; letter-spacing: .9px; }
.w553 { width: 553px; letter-spacing: .15px; } .w444 { width: 448px; letter-spacing: .3px; } .w294 { width: 295px; letter-spacing: .3px; } .w371 { width: 371px; letter-spacing: .55px; }
.heading { display: flex; justify-content: space-between; width: 797px; }
.dots { height: 16px; margin: 0 3px 0 3px; width: 791px; background: radial-gradient(circle at 1.500px 8px, #111 .7px, transparent 1.300px) 0 0 / 7.68px 16px; }
.fields { display: flex; gap: 123px; height: 30px; padding-top: 5px; }
sub, sup { font-size: 12px; line-height: 0; }
sub { vertical-align: -3px; } sup { vertical-align: 5px; }
.rule { width: 798px; height: 7px; border: 1px solid #222; border-top-width: 2px; }
.question { display: grid; grid-template-columns: 22px 1fr; padding: 40px 0 0 22px; height: 85px; }
.question p { display: flex; height: 22px; }
.page code { font-family: "Liberation Mono", monospace; font-size: 15px; }
.rest { margin-left: 109px; } .rest2 { width: 107px; text-align: right; } .dot { margin-left: 111px; }
.figrow { position: relative; height: 189px; padding-left: 60px; }
.fig { font-family: "Liberation Serif", serif; }
.num { font-size: 18px; } .lab { font-family: "Liberation Mono", monospace; font-size: 13px; } .eps { font-size: 16px; font-style: italic; } .m1 { font-size: 17px; font-style: italic; }
.peek2, .peek3 { position: absolute; top: 70px; left: 590px; } .peek3 { left: 709px; }
.sub { display: grid; grid-template-columns: 31px 1fr; padding-left: 52px; height: 45px; }
.sub p { display: flex; height: 22px; } .after { width: 109px; text-align: right; } .after2 { width: 111px; text-align: right; }
.answers { display: grid; grid-template-columns: 39px 143px 39px 150px; grid-template-rows: 45px 45px; padding: 0 0 0 117px; align-items: center; }
.answers em { font-style: normal; font-size: 16.5px; word-spacing: -1px; }
.check { width: 24px; height: 24px; border: 1px solid #222; font: 14px/23px "Noto Sans", sans-serif; text-align: center; }
.low { line-height: 27px; text-align: left; padding-left: 3px; }
.memo { position: absolute; border: 2px solid #f5141c; background: #fff; color: #3660cc; font: 13.5px/16.800px "Noto Sans", sans-serif; word-spacing: 1.8px; white-space: pre; overflow: hidden; }
.ast { font-size: 10px; line-height: 0; } .eq { letter-spacing: .72px; }
.m-a { left: 351px; top: 158px; width: 102px; height: 180px; text-indent: -1px; }
.m-b { left: 455px; top: 155px; width: 103px; height: 221px; }
.m-c { left: 566px; top: 143px; width: 103px; height: 254px; text-indent: -1px; }
.m-d { left: 676px; top: 127px; width: 112px; height: 288px; }
.m-e { left: 793px; top: 120px; width: 148px; height: 288px; }
.caret { display: inline-block; width: 1px; height: 15px; background: #222; vertical-align: -3px; }
.ibeam { position: absolute; left: 821px; top: 387px; }
.vscroll { position: absolute; right: 0; top: 0; width: 8px; height: 486px; background: #dedada; display: flex; flex-direction: column; }
.vscroll span { height: 9px; display: flex; align-items: center; justify-content: center; background: #eee; }
.vscroll i { margin-top: 17px; height: 56px; background: #fff; border: 1px solid #ccc; border-width: 1px 0 1px 1px; }
.vscroll .end { margin-top: auto; }

.controls { height: 85px; display: flex; align-items: flex-start; padding: 36px 12px 0 16px; color: #bbb; font-size: 11.5px; letter-spacing: -.1px; }
.ctl { position: relative; display: flex; flex-direction: column; align-items: center; gap: 1px; white-space: nowrap; line-height: 17px; }
.ctl em { position: absolute; left: 54px; top: 2px; font-style: normal; }
.c58 { width: 59px; } .c90 { width: 90px; margin-left: 17px; } .c80 { width: 80px; margin-left: 203px; } .c88 { width: 88px; } .c100 { width: 100px; }
.cv { margin: 8px 1px 0 -1px; } .cv2 { margin-left: -5px; }
.green { color: #23d959; }
.leave { margin: 9px 0 0 auto; width: 61px; height: 27px; line-height: 26px; border-radius: 7px; background: #b52626; color: #fff; text-align: center; font-size: 12px; letter-spacing: -.4px; }

.panel { width: 320px; background: #fff; display: flex; flex-direction: column; }
.phead { height: 44px; position: relative; line-height: 45px; text-align: center; font-size: 12px; color: #444; }
.phead svg { position: absolute; left: 17px; top: 16px; }
.search { margin: 0 4px 0 9px; height: 28px; border-radius: 10px; background: #e5e5e8; display: flex; align-items: center; gap: 5px; padding: 0 0 1px 10px; font-size: 11.5px; letter-spacing: -.1px; color: #222; }
.search svg { color: #777; width: 13px; height: 13px; }
.listwrap { display: flex; height: 585px; padding-top: 5px; }
.list { width: 310px; list-style: none; }
.list li { height: 41px; display: flex; align-items: center; padding: 0 14px 0 19px; gap: 7px; font-size: 12.5px; color: #444; }
.list li span { flex: 1; white-space: nowrap; margin-left: 5px; min-width: 0; padding-top: 1px; }
.av { width: 26px; height: 26px; border-radius: 7px; color: #fff; text-align: center; line-height: 26px; font-size: 12.5px; flex: none; }
.orange { background: #d35400; } .red { background: #c0392b; } .teal { background: #16a085; } .blue { background: #2980b9; } .purple { background: #8e44ad; } .navy { background: #34495e; } .green2 { background: #27ae60; } .amber { background: #f39c12; }
.st { width: 17px; height: 16px; color: #e03038; } .gray { color: #808087; }
.sh { margin-right: 4px; } .rc { margin-right: 3px; }
.bar { width: 8px; height: 571px; border-radius: 4px; background: #f1f1f6; margin-top: 1px; }
.bar i { display: block; height: 106px; border-radius: 4px; background: #adadb5; }
.actions { display: flex; gap: 18px; padding: 11px 0 0 19px; color: #222; }
.actions span { height: 23px; line-height: 22px; border-radius: 6px; background: #f2f2f7; text-align: center; width: 63px; white-space: nowrap; font-size: 11.5px; }
.actions span:nth-child(2) { width: 96px; } .actions span:nth-child(3) { width: 87px; }

.taskbar { height: 40px; background: #101010; display: flex; color: #fff; }
.app { position: relative; width: 49px; height: 40px; display: flex; align-items: center; justify-content: center; }
.run::after { content: ""; position: absolute; bottom: 0; left: 5px; width: 40px; height: 2px; background: #76b9ed; }
.active { background: linear-gradient(90deg, transparent 1px, #333 1px); } .active::after { left: 1px; width: 48px; }
.count { fill: #fff; font-size: 12px; font-weight: bold; }
.tray { margin-left: 343px; width: 113px; display: flex; align-items: center; justify-content: space-between; }
.clock { width: 78px; padding-top: 2px; display: flex; flex-direction: column; align-items: center; font-size: 11.5px; line-height: 18px; letter-spacing: -.3px; }
.notif { width: 44px; padding: 0 0 0 6px; margin-right: 4px; display: flex; align-items: center; border-right: 1px solid #666; }
.three { fill: #fff; font-size: 11px; }
```
